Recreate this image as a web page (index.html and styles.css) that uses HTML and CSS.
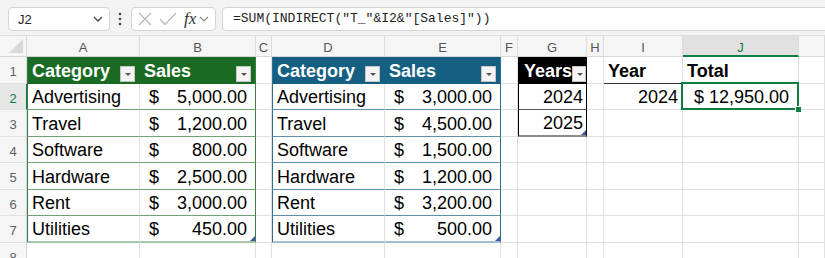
FILE: index.html
```html
<!DOCTYPE html>
<html lang="en">
<head>
    <meta charset="UTF-8">
    <meta name="viewport" content="width=device-width, initial-scale=1.0">
    <title>Book1 - Excel</title>
    <link rel="stylesheet" href="styles.css">
</head>
<body>
    <div class="formula-bar">
        <div class="name-box">
            <span>J2</span>
            <svg width="12" height="8" viewBox="0 0 12 8"><path d="M2 2 L6 6 L10 2" fill="none" stroke="#444" stroke-width="1.3"/></svg>
        </div>
        <div class="dots">
            <svg width="4" height="14" viewBox="0 0 4 14"><circle cx="2" cy="2" r="1.3" fill="#444"/><circle cx="2" cy="7" r="1.3" fill="#444"/><circle cx="2" cy="12" r="1.3" fill="#444"/></svg>
        </div>
        <div class="fx-box">
            <svg width="14" height="14" viewBox="0 0 14 14"><path d="M1 1 L13 13 M13 1 L1 13" fill="none" stroke="#b8b8b8" stroke-width="1.2"/></svg>
            <svg width="18" height="14" viewBox="0 0 18 14"><path d="M1 7 L6 12.5 L17 1" fill="none" stroke="#b8b8b8" stroke-width="1.2"/></svg>
            <span class="fx">fx</span>
            <svg width="10" height="6" viewBox="0 0 10 6"><path d="M1 1 L5 5 L9 1" fill="none" stroke="#888" stroke-width="1.1"/></svg>
        </div>
        <div class="formula">=SUM(INDIRECT("T_"&amp;I2&amp;"[Sales]"))</div>
    </div>

    <div class="sheet">
        <!-- column headers -->
        <div class="corner"><svg width="14" height="14" viewBox="0 0 14 14"><path d="M14 0 L14 14 L0 14 Z" fill="#d9d9d9"/></svg></div>
        <div class="ch">A</div>
        <div class="ch">B</div>
        <div class="ch">C</div>
        <div class="ch">D</div>
        <div class="ch">E</div>
        <div class="ch">F</div>
        <div class="ch">G</div>
        <div class="ch">H</div>
        <div class="ch">I</div>
        <div class="ch active">J</div>
        <div class="ch"></div>

        <!-- row 1 -->
        <div class="rh">1</div>
        <div class="c th green first">Category<span class="filter"></span></div>
        <div class="c th green last">Sales<span class="filter"></span></div>
        <div class="c"></div>
        <div class="c th blue first">Category<span class="filter"></span></div>
        <div class="c th blue last">Sales<span class="filter"></span></div>
        <div class="c"></div>
        <div class="c th black first last">Years<span class="filter"></span></div>
        <div class="c"></div>
        <div class="c hd">Year</div>
        <div class="c hd">Total</div>
        <div class="c"></div>

        <!-- row 2 -->
        <div class="rh active">2</div>
        <div class="c green first">Advertising</div>
        <div class="c green last acc"><span>$</span><span>5,000.00</span></div>
        <div class="c"></div>
        <div class="c blue first">Advertising</div>
        <div class="c blue last acc"><span>$</span><span>3,000.00</span></div>
        <div class="c"></div>
        <div class="c black first last num">2024</div>
        <div class="c"></div>
        <div class="c num">2024</div>
        <div class="c num total sel">$ 12,950.00<span class="handle"></span></div>
        <div class="c"></div>

        <!-- row 3 -->
        <div class="rh">3</div>
        <div class="c green first">Travel</div>
        <div class="c green last acc"><span>$</span><span>1,200.00</span></div>
        <div class="c"></div>
        <div class="c blue first">Travel</div>
        <div class="c blue last acc"><span>$</span><span>4,500.00</span></div>
        <div class="c"></div>
        <div class="c black first last end num">2025<span class="grip"></span></div>
        <div class="c"></div>
        <div class="c"></div>
        <div class="c"></div>
        <div class="c"></div>

        <!-- row 4 -->
        <div class="rh">4</div>
        <div class="c green first">Software</div>
        <div class="c green last acc"><span>$</span><span>800.00</span></div>
        <div class="c"></div>
        <div class="c blue first">Software</div>
        <div class="c blue last acc"><span>$</span><span>1,500.00</span></div>
        <div class="c"></div>
        <div class="c"></div>
        <div class="c"></div>
        <div class="c"></div>
        <div class="c"></div>
        <div class="c"></div>

        <!-- row 5 -->
        <div class="rh">5</div>
        <div class="c green first">Hardware</div>
        <div class="c green last acc"><span>$</span><span>2,500.00</span></div>
        <div class="c"></div>
        <div class="c blue first">Hardware</div>
        <div class="c blue last acc"><span>$</span><span>1,200.00</span></div>
        <div class="c"></div>
        <div class="c"></div>
        <div class="c"></div>
        <div class="c"></div>
        <div class="c"></div>
        <div class="c"></div>

        <!-- row 6 -->
        <div class="rh">6</div>
        <div class="c green first">Rent</div>
        <div class="c green last acc"><span>$</span><span>3,000.00</span></div>
        <div class="c"></div>
        <div class="c blue first">Rent</div>
        <div class="c blue last acc"><span>$</span><span>3,200.00</span></div>
        <div class="c"></div>
        <div class="c"></div>
        <div class="c"></div>
        <div class="c"></div>
        <div class="c"></div>
        <div class="c"></div>

        <!-- row 7 -->
        <div class="rh">7</div>
        <div class="c green first end">Utilities</div>
        <div class="c green last end acc"><span>$</span><span>450.00</span><span class="grip"></span></div>
        <div class="c"></div>
        <div class="c blue first end">Utilities</div>
        <div class="c blue last end acc"><span>$</span><span>500.00</span><span class="grip"></span></div>
        <div class="c"></div>
        <div class="c"></div>
        <div class="c"></div>
        <div class="c"></div>
        <div class="c"></div>
        <div class="c"></div>

        <!-- row 8 -->
        <div class="rh">8</div>
        <div class="c"></div>
        <div class="c"></div>
        <div class="c"></div>
        <div class="c"></div>
        <div class="c"></div>
        <div class="c"></div>
        <div class="c"></div>
        <div class="c"></div>
        <div class="c"></div>
        <div class="c"></div>
        <div class="c"></div>
    </div>
</body>
</html>
```

FILE: styles.css
```css
body {
    margin: 0;
    width: 825px;
    height: 258px;
    overflow: hidden;
    background: #fff;
    font-family: "Liberation Sans", Arial, sans-serif;
    color: #000;
}

/* formula bar */

.formula-bar {
    display: flex;
    align-items: flex-start;
    box-sizing: border-box;
    height: 36px;
    padding: 7px 0 0 8px;
    background: #f3f3f3;
    border-bottom: 1px solid #dcdcdc;
}

.name-box {
    display: flex;
    align-items: center;
    justify-content: space-between;
    box-sizing: border-box;
    width: 102px;
    height: 24px;
    padding: 0 5px 0 9px;
    background: #fff;
    border: 1px solid #d4d4d4;
    border-radius: 4px;
    font-size: 13px;
    color: #222;
}

.dots {
    display: flex;
    align-items: center;
    justify-content: center;
    width: 20px;
    height: 24px;
}

.fx-box {
    display: flex;
    align-items: center;
    gap: 7px;
    box-sizing: border-box;
    width: 85px;
    height: 24px;
    margin-left: 1px;
    padding-left: 6px;
    background: #fff;
    border: 1px solid #d4d4d4;
    border-radius: 4px;
}

.fx {
    font-family: "Liberation Serif", "Times New Roman", serif;
    font-style: italic;
    font-size: 17px;
    color: #333;
    margin-right: -4px;
}

.formula {
    flex: 1;
    box-sizing: border-box;
    height: 24px;
    margin-left: 6px;
    margin-right: -6px;
    padding: 3px 0 0 10px;
    background: #fff;
    border: 1px solid #d4d4d4;
    border-radius: 4px;
    font-family: "Liberation Mono", "Courier New", monospace;
    font-size: 13px;
    color: #222;
}

/* grid */

.sheet {
    display: grid;
    grid-template-columns: 27px 113px 116px 16px 113px 116px 17px 69px 17px 79px 116px 1fr;
    grid-template-rows: 21px 27px 26px 27px 26px 27px 26px 27px 26px;
}

.corner {
    display: flex;
    align-items: flex-end;
    justify-content: flex-end;
    box-sizing: border-box;
    padding: 0 3px 3px 0;
    background: #f5f5f5;
    border-right: 1px solid #d6d6d6;
    border-bottom: 1px solid #d6d6d6;
}

.ch {
    display: flex;
    align-items: center;
    justify-content: center;
    box-sizing: border-box;
    padding-top: 3px;
    background: #f5f5f5;
    border-right: 1px solid #dcdcdc;
    border-bottom: 1px solid #d6d6d6;
    font-size: 13px;
    color: #555;
}

.ch.active {
    background: #e1e1e1;
    border-bottom: 2px solid #107c41;
    color: #107c41;
}

.rh {
    display: flex;
    align-items: center;
    justify-content: center;
    box-sizing: border-box;
    padding-top: 3px;
    background: #f5f5f5;
    border-right: 1px solid #d6d6d6;
    border-bottom: 1px solid #e1e1e1;
    font-size: 13px;
    color: #616161;
}

.rh.active {
    background: #e6e6e6;
    border-right-color: #107c41;
    color: #107c41;
}

.c {
    position: relative;
    display: flex;
    align-items: flex-end;
    box-sizing: border-box;
    padding: 0 4px 2px 4px;
    border-right: 1px solid #e1e1e1;
    border-bottom: 1px solid #e1e1e1;
    font-size: 18px;
    line-height: 20px;
    white-space: nowrap;
}

.num {
    justify-content: flex-end;
}

.acc {
    justify-content: space-between;
    padding: 0 8px 2px 9px;
}

.hd {
    font-weight: bold;
    border-bottom-color: #333;
}

/* table styles */

.th {
    font-weight: bold;
    color: #fff;
}

.filter {
    position: relative;
    box-sizing: border-box;
    width: 15px;
    height: 16px;
    margin-left: auto;
    margin-bottom: -1px;
    background: #f4f4f4;
    border: 1px solid #c6c6c6;
}

.filter::after {
    content: "";
    position: absolute;
    left: 4px;
    top: 6px;
    border-left: 3px solid transparent;
    border-right: 3px solid transparent;
    border-top: 3px solid #555;
}

.th.green {
    background: #196b24;
    border-color: #196b24;
}

.th.blue {
    background: #156082;
    border-color: #156082;
}

.th.black {
    background: #000;
    border-color: #000;
    padding-left: 5px;
    padding-right: 0;
}

.green.first {
    border-left: 1px solid #3b7d45;
}

.green {
    border-bottom-color: #6fa377;
}

.green.last {
    border-right-color: #3b7d45;
}

.green.end {
    border-bottom: 2px solid #a6c8aa;
}

.blue.first {
    border-left: 1px solid #2f6f8f;
}

.blue {
    border-bottom-color: #5f90aa;
}

.blue.last {
    border-right-color: #2f6f8f;
}

.blue.end {
    border-bottom: 2px solid #a3bfcd;
}

.black.first {
    border-left: 1px solid #000;
}

.black {
    border-bottom-color: #555;
    border-right-color: #000;
    padding-right: 3px;
}

.black.end {
    border-bottom: 2px solid #8c8c8c;
}

.grip {
    position: absolute;
    right: 0;
    bottom: 0;
    border-left: 5px solid transparent;
    border-bottom: 5px solid #3a55a8;
}

/* selection */

.total {
    padding-right: 9px;
}

.sel::after {
    content: "";
    position: absolute;
    left: -2px;
    top: -2px;
    right: -1px;
    bottom: -1px;
    border: 2px solid #107c41;
}

.handle {
    position: absolute;
    right: -4px;
    bottom: -4px;
    width: 5px;
    height: 5px;
    background: #107c41;
    border: 1px solid #fff;
    z-index: 1;
}
```
